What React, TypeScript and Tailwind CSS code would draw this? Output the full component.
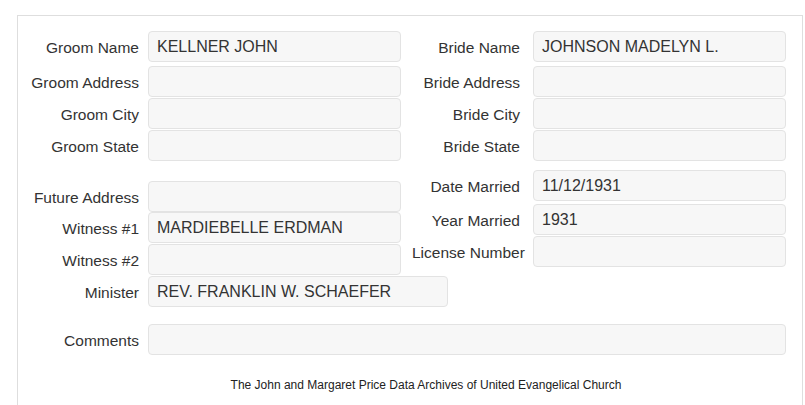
const font = { fontFamily: "'Liberation Sans', Arial, sans-serif" };

function Field({
  label,
  value,
  labelW,
  gap,
  inputW = "w-[253px]",
  className = "",
}: {
  label: string;
  value?: string;
  labelW: string;
  gap: string;
  inputW?: string;
  className?: string;
}) {
  return (
    <div className={`flex items-center ${className}`}>
      <div className={`${labelW} shrink-0 text-right whitespace-nowrap text-[15.5px] text-[#333] pt-[2px]`}>
        {label}
      </div>
      <div
        className={`${gap} ${inputW} h-[31px] shrink-0 rounded-[4px] border border-[#e3e3e3] bg-[#f7f7f7] px-[8px] flex items-center text-[16px] text-[#333]`}
      >
        {value}
      </div>
    </div>
  );
}

export default function App() {
  const L = { labelW: "w-[111px]", gap: "ml-[9px]" };
  const R = { labelW: "w-[108px]", gap: "ml-[13px]" };
  return (
    <div className="w-[805px] h-[405px] overflow-hidden bg-white pt-[15px] pl-[17px] pr-[2px]" style={font}>
      <div className="border-t border-l border-r border-[#dedede] h-[400px] pt-[15px]">
        {/* groom / bride */}
        <div className="flex">
          <div className="pl-[10px] flex flex-col">
            <Field label="Groom Name" value="KELLNER JOHN" {...L} className="mb-[4px]" />
            <Field label="Groom Address" {...L} className="mb-px" />
            <Field label="Groom City" {...L} className="mb-px" />
            <Field label="Groom State" {...L} />
          </div>
          <div className="pl-[11px] flex flex-col">
            <Field label="Bride Name" value="JOHNSON MADELYN L." {...R} className="mb-[4px]" />
            <Field label="Bride Address" {...R} className="mb-px" />
            <Field label="Bride City" {...R} className="mb-px" />
            <Field label="Bride State" {...R} />
          </div>
        </div>

        {/* witnesses / marriage */}
        <div className="flex mt-[9px]">
          <div className="pl-[10px] pt-[11px] flex flex-col">
            <Field label="Future Address" {...L} />
            <Field label="Witness #1" value="MARDIEBELLE ERDMAN" {...L} />
            <Field label="Witness #2" {...L} className="mt-px" />
            <Field label="Minister" value="REV. FRANKLIN W. SCHAEFER" {...L} inputW="w-[300px]" className="mt-px" />
          </div>
          <div className="-ml-[36px] flex flex-col">
            <Field label="Date Married" value="11/12/1931" {...R} className="mb-[3px]" />
            <Field label="Year Married" value="1931" {...R} className="mb-px" />
            <Field label="License Number" {...R} />
          </div>
        </div>

        <div className="pl-[10px] mt-[17px]">
          <Field label="Comments" {...L} inputW="w-[638px]" />
        </div>

        <p className="mt-[21px] text-center text-[12px] text-[#222] pl-[32px]">
          The John and Margaret Price Data Archives of United Evangelical Church
        </p>
      </div>
    </div>
  );
}
